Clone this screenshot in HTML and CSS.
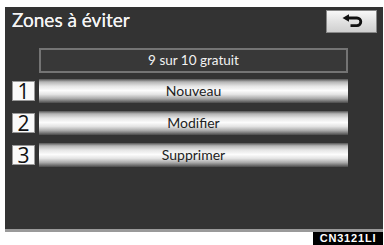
FILE: index.html
```html
<!DOCTYPE html>
<html lang="fr">
<head>
<meta charset="utf-8">
<link rel="stylesheet" href="styles.css">
</head>
<body>
<div class="screen">
  <div class="header">
    <div class="title">Zones à éviter</div>
    <div class="back">
      <svg width="22" height="13" viewBox="0 0 22 13">
        <path d="M5.5 3 H15 a3.8 3.8 0 0 1 0 7.6 H8.5" fill="none" stroke="#111" stroke-width="2.8"/>
        <path d="M0.5 3 L7 -0.8 V6.8 Z" fill="#111"/>
      </svg>
    </div>
  </div>
  <div class="counter">9 sur 10 gratuit</div>
  <div class="rows">
    <div class="row"><span class="num">1</span><div class="btn">Nouveau</div></div>
    <div class="row"><span class="num">2</span><div class="btn">Modifier</div></div>
    <div class="row"><span class="num">3</span><div class="btn">Supprimer</div></div>
  </div>
</div>
<div class="footer"><span class="code">CN3121LI</span></div>
</body>
</html>
```
FILE: styles.css
```css
html, body {
  margin: 0;
  padding: 0;
  background: #fff;
  width: 384px;
  height: 245px;
  overflow: hidden;
}
.screen {
  margin: 7px 1px 0 5px;
  height: 222px;
  background: #333333;
  border-bottom: 3px solid #9a9a9a;
  box-sizing: content-box;
  display: flex;
  flex-direction: column;
}
.header {
  display: flex;
  justify-content: space-between;
  align-items: flex-start;
  padding: 3px 6px 0 7px;
}
.title {
  font-family: Lato, "Open Sans", sans-serif;
  font-size: 19px;
  line-height: 22px;
  color: #f4f4f4;
  margin-top: -1px;
  text-shadow: 0 0 0.4px #f4f4f4;
}
.back {
  width: 49px;
  height: 21px;
  border: 1px solid #888;
  background: linear-gradient(#f8f8f8, #e2e2e2 50%, #cfcfcf);
  display: flex;
  align-items: center;
  justify-content: center;
}
.back svg { margin-left: 2px; overflow: visible; }
.counter {
  margin: 15px 0 0 34px;
  width: 305px;
  height: 21px;
  border: 2px solid #747474;
  background: #383838;
  color: #f2f2f2;
  font-family: Lato, "Open Sans", sans-serif;
  font-size: 13.5px;
  line-height: 21px;
  text-align: center;
}
.rows {
  margin-top: 6px;
  display: flex;
  flex-direction: column;
  gap: 8px;
}
.row {
  display: flex;
  align-items: center;
  padding-left: 7px;
  gap: 4px;
}
.num {
  width: 21px;
  height: 18px;
  border: 1px solid #999;
  background: #fafafa;
  color: #111;
  font-family: "Open Sans", sans-serif;
  font-size: 21px;
  line-height: 18px;
  text-align: center;
}
.btn {
  width: 309px;
  height: 24px;
  background: linear-gradient(to bottom, #555 0%, #b4b4b4 12%, #e6e6e6 30%, #fcfcfc 48%, #e4e4e4 64%, #a8a8a8 82%, #4a4a4a 100%);
  color: #222;
  font-family: Lato, "Open Sans", sans-serif;
  font-size: 14px;
  line-height: 24px;
  text-align: center;
}
.footer {
  display: flex;
  justify-content: flex-end;
  padding-right: 1px;
}
.code {
  width: 70px;
  height: 13px;
  background: #000;
  color: #fff;
  font-family: "Liberation Sans", Arial, sans-serif;
  font-weight: bold;
  font-size: 11px;
  line-height: 13px;
  text-align: center;
  letter-spacing: 0.8px;
}
```
